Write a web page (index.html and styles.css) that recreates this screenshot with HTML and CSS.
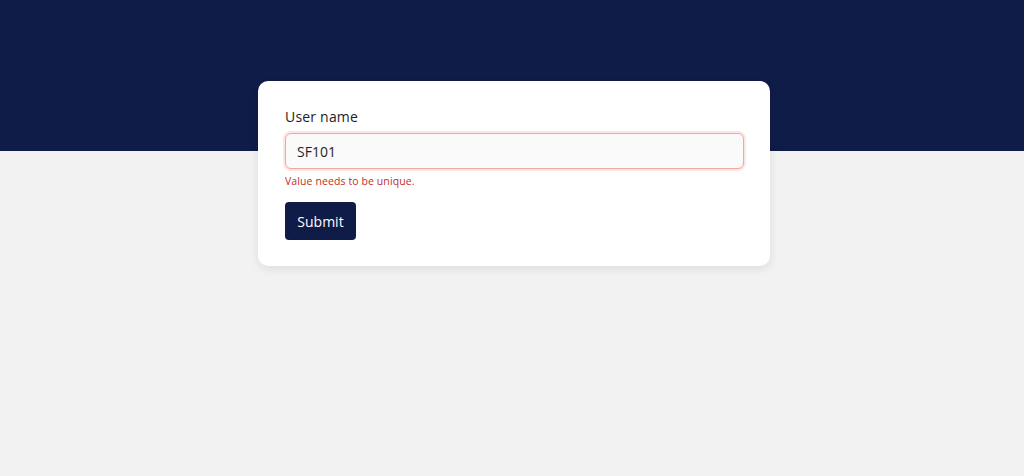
FILE: index.html
```html
<!DOCTYPE html>
<html lang="en">
<head>
<meta charset="utf-8">
<link rel="stylesheet" href="styles.css">
</head>
<body>
<div class="hero"></div>
<main class="page">
  <form class="card">
    <label class="label" for="username">User name</label>
    <input id="username" class="input" type="text" value="SF101">
    <div class="error">Value needs to be unique.</div>
    <button class="btn" type="button">Submit</button>
  </form>
</main>
</body>
</html>
```

FILE: styles.css
```css
* { box-sizing: border-box; }
html, body { margin: 0; padding: 0; }
body {
  background: #f2f2f2;
  font-family: "Open Sans", "Noto Sans", sans-serif;
  color: #1f1f1f;
  height: 476px;
  overflow: hidden;
}
.hero {
  height: 151px;
  background: #101c48;
}
.page {
  display: flex;
  justify-content: center;
  margin-top: -70px;
  padding-left: 4px;
}
.card {
  width: 512px;
  background: #ffffff;
  border-radius: 10px;
  box-shadow: 0 3px 10px rgba(0,0,0,0.09);
  padding: 27px 26px 26px 27px;
  display: flex;
  flex-direction: column;
  align-items: flex-start;
}
.label {
  font-size: 14px;
  font-weight: 500;
  line-height: 18px;
  color: #1d1d1f;
  margin-bottom: 7px;
  letter-spacing: 0.2px;
}
.input {
  width: 459px;
  height: 36px;
  border: 1px solid #f0a8a2;
  box-shadow: 0 0 0 2px #fde6e4;
  border-radius: 6px;
  background: #fafafa;
  padding: 0 11px;
  font-family: inherit;
  font-size: 14px;
  color: #1f1f1f;
  outline: none;
}
.error {
  margin-top: 5px;
  font-size: 10.5px;
  line-height: 14px;
  color: #c0302a;
  letter-spacing: 0.1px;
}
.btn {
  margin-top: 14px;
  width: 71px;
  height: 38px;
  background: #101c48;
  color: #ffffff;
  border: none;
  border-radius: 4px;
  font-family: inherit;
  font-size: 14px;
  font-weight: 500;
  padding: 0;
}
```
